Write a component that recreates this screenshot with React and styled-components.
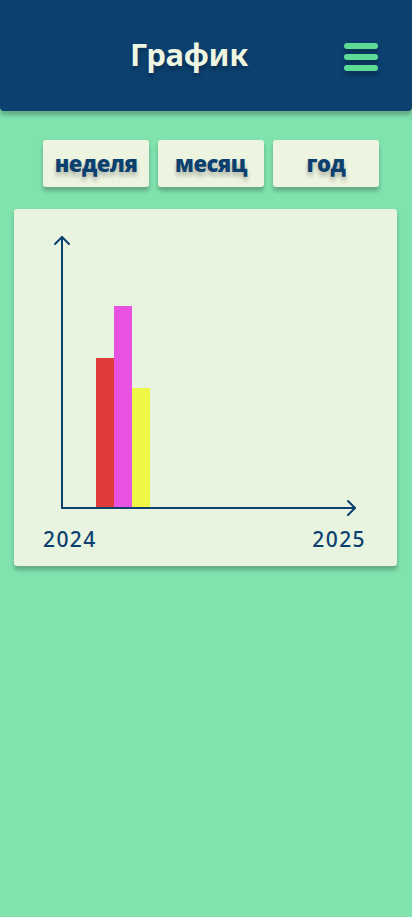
import React from "react";
import styled, { createGlobalStyle } from "styled-components";

const GlobalStyle = createGlobalStyle`
  html, body { margin: 0; padding: 0; background: #80e3ad; }
  body { font-family: "Open Sans", "Noto Sans", sans-serif; }
  #root { min-height: 100vh; background: #80e3ad; }
`;

const Page = styled.div`
  min-height: 917px;
  background: #80e3ad;
  display: flex;
  flex-direction: column;
`;

const Header = styled.header`
  height: 111px;
  background: #0c406f;
  border-radius: 0 0 4px 4px;
  box-shadow: 0 4px 4px rgba(0, 0, 0, 0.25);
  display: flex;
  align-items: center;
  padding: 0 34px;
  box-sizing: border-box;
`;

const Title = styled.h1`
  flex: 1;
  margin: 0;
  text-align: center;
  font-family: "Noto Sans", "Open Sans", sans-serif;
  font-weight: 700;
  font-size: 31px;
  letter-spacing: -0.3px;
  color: #eef5e0;
  text-shadow: 0 4px 4px rgba(0, 0, 0, 0.25);
  padding-bottom: 4px;
`;

const MenuButton = styled.button`
  width: 34px;
  padding: 0;
  border: none;
  background: none;
  display: flex;
  flex-direction: column;
  gap: 5px;
  margin-top: 2px;
  cursor: pointer;
`;

const MenuBar = styled.span`
  display: block;
  height: 6px;
  border-radius: 3px;
  background: #5ddc96;
  box-shadow: 0 4px 4px rgba(0, 0, 0, 0.25);
`;

const Tabs = styled.nav`
  display: flex;
  gap: 9px;
  padding: 0 33px 0 43px;
  margin-top: 29px;
`;

const Tab = styled.button`
  width: 106px;
  height: 47px;
  border: none;
  border-radius: 3px;
  background: #edf4e0;
  box-shadow: 0 4px 4px rgba(0, 0, 0, 0.25);
  font-family: "Open Sans", "Noto Sans", sans-serif;
  font-weight: 800;
  font-size: 22px;
  letter-spacing: -0.5px;
  color: #0c406f;
  text-shadow: 0 4px 4px rgba(0, 0, 0, 0.25);
  padding: 0 0 2px;
  cursor: pointer;
`;

const Card = styled.section`
  margin: 22px 15px 0 14px;
  height: 357px;
  background: #e8f4df;
  border-radius: 3px;
  box-shadow: 0 4px 4px rgba(0, 0, 0, 0.25);
  display: flex;
  flex-direction: column;
`;

const ChartSvg = styled.svg`
  display: block;
  width: 383px;
  height: 318px;
`;

const Labels = styled.div`
  display: flex;
  justify-content: space-between;
  padding: 0 31px 0 29px;
  font-family: "Noto Sans", "Open Sans", sans-serif;
  font-weight: 500;
  font-size: 21px;
  letter-spacing: 1.4px;
  line-height: 24px;
  color: #0c406f;
`;

const bars = [
  { x: 82, top: 149, color: "#e03b3b" },
  { x: 100, top: 97, color: "#e852e0" },
  { x: 118, top: 179, color: "#eef646" },
];

export default function App() {
  return (
    <>
      <GlobalStyle />
      <Page>
        <Header>
          <Title>График</Title>
          <MenuButton aria-label="menu">
            <MenuBar />
            <MenuBar />
            <MenuBar />
          </MenuButton>
        </Header>
        <Tabs>
          <Tab>неделя</Tab>
          <Tab>месяц</Tab>
          <Tab>год</Tab>
        </Tabs>
        <Card>
          <ChartSvg viewBox="0 0 383 318">
            {bars.map((b) => (
              <rect key={b.x} x={b.x} y={b.top} width={18} height={299 - b.top} fill={b.color} />
            ))}
            <g fill="none" stroke="#0c406f" strokeWidth="2" strokeLinecap="round" strokeLinejoin="round">
              <path d="M48 299 V28" />
              <path d="M41 35 L48 28 L55 35" />
              <path d="M48 299 H341" />
              <path d="M334 292 L341 299 L334 306" />
            </g>
          </ChartSvg>
          <Labels>
            <span>2024</span>
            <span>2025</span>
          </Labels>
        </Card>
      </Page>
    </>
  );
}
